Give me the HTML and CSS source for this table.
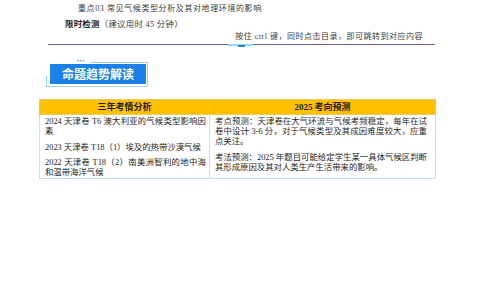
FILE: index.html
```html
<!DOCTYPE html>
<html lang="zh">
<head>
<meta charset="utf-8">
<link rel="stylesheet" href="styles.css">
</head>
<body>
<div class="toc">
  <div class="toc-item">重点02 气候类型的判读</div>
  <div class="toc-item">重点03 常见气候类型分析及其对地理环境的影响</div>
  <div class="toc-test"><b>限时检测</b>（建议用时 45 分钟）</div>
  <div class="toc-tip">按住 ctrl 键，同时点击目录，即可跳转到对应内容</div>
</div>
<div class="rule"><span class="rule-accent"></span></div>
<div class="badge">
  <span class="badge-dots">•••</span>
  <div class="badge-label">命题趋势解读</div>
</div>
<table class="analysis">
  <thead>
    <tr>
      <th class="col-left">三年考情分析</th>
      <th class="col-right"><span class="num">2025</span> 考向预测</th>
    </tr>
  </thead>
  <tbody>
    <tr>
      <td>
        <p>2024 天津卷 T6 澳大利亚的气候类型影响因素</p>
        <p>2023 天津卷 T18（1）埃及的热带沙漠气候</p>
        <p>2022 天津卷 T18（2）南美洲智利的地中海和温带海洋气候</p>
      </td>
      <td class="cell-right">
        <p>考点预测：天津卷在大气环流与气候考频稳定，每年在试卷中设计 3-6 分，对于气候类型及其成因难度较大，应重点关注。</p>
        <p>考法预测：2025 年题目可能给定学生某一具体气候区判断其形成原因及其对人类生产生活带来的影响。</p>
      </td>
    </tr>
  </tbody>
</table>
</body>
</html>
```

FILE: styles.css
```css
html, body {
  margin: 0;
  padding: 0;
  background: #ffffff;
}

body {
  font-family: "Liberation Serif", "Noto Sans CJK SC", serif;
  color: #1c1c1c;
  overflow: hidden;
}

.toc {
  margin-left: 48px;
  width: 387px;
  margin-top: -9px;
  color: #3a3a3a;
}

.toc-item {
  padding-left: 30px;
  font-size: 8px;
  line-height: 12px;
  letter-spacing: 0.6px;
  white-space: nowrap;
}

.toc-test {
  margin-top: 2px;
  padding-left: 17px;
  font-size: 8.4px;
  line-height: 12px;
  letter-spacing: 0.3px;
  white-space: nowrap;
}

.toc-test b {
  font-family: "Noto Sans CJK SC", sans-serif;
  font-weight: 700;
  color: #222;
}

.toc-tip {
  padding-right: 12px;
  text-align: right;
  font-size: 8px;
  line-height: 12px;
  letter-spacing: 0.5px;
  white-space: nowrap;
}

.rule {
  position: relative;
  margin-top: 1px;
  margin-left: 48px;
  width: 387px;
  height: 1px;
  background: #6060ae;
}

.rule-accent {
  position: absolute;
  left: 180px;
  top: 0;
  width: 26px;
  height: 2px;
  background: #8fdaf2;
}

.rule-accent::after {
  content: "";
  position: absolute;
  left: 10px;
  top: 1px;
  width: 7px;
  height: 2px;
  background: #2d7fd6;
}

.badge {
  position: relative;
  margin-top: 17px;
  margin-left: 46px;
  width: 96px;
  padding: 2px 1px 2px 4px;
  border-right: 1px solid #9fd0f0;
  border-bottom: 1px solid #9fd0f0;
}

.badge::before {
  content: "";
  position: absolute;
  top: 0;
  left: 44px;
  right: -1px;
  height: 1px;
  background: #9fd0f0;
}

.badge::after {
  content: "";
  position: absolute;
  left: 0;
  bottom: -1px;
  width: 1px;
  height: 11px;
  background: #9fd0f0;
}

.badge-dots {
  position: absolute;
  top: -4px;
  left: 31px;
  font-size: 6px;
  line-height: 6px;
  letter-spacing: 0.5px;
  color: #3a8ee6;
}

.badge-label {
  height: 20px;
  background: #1b80ea;
  color: #ffffff;
  font-family: "Noto Sans CJK SC", sans-serif;
  font-weight: 700;
  font-size: 12px;
  line-height: 20px;
  text-align: center;
}

.analysis {
  margin-top: 12px;
  margin-left: 39px;
  width: 397px;
  border-collapse: collapse;
  table-layout: fixed;
}

.analysis th {
  height: 14px;
  padding: 0;
  background: #ffc000;
  border: 1px solid #e9c860;
  font-family: "Noto Sans CJK SC", sans-serif;
  font-weight: 700;
  font-size: 9px;
  line-height: 14px;
  text-align: center;
  color: #1a1a1a;
}

.analysis th .num {
  font-family: "Liberation Serif", serif;
  font-weight: 700;
}

.analysis .col-left {
  width: 169px;
}

.analysis td {
  vertical-align: top;
  padding: 2px 3px 0 5px;
  border: 1px solid #c3e3ec;
  font-size: 8.4px;
  line-height: 10px;
  text-align: justify;
  color: #1e1e1e;
}

.analysis td.cell-right {
  padding-right: 8px;
}

.analysis td p {
  margin: 0 0 5.5px;
}

.analysis td p:last-child {
  margin-bottom: 0;
}
```
